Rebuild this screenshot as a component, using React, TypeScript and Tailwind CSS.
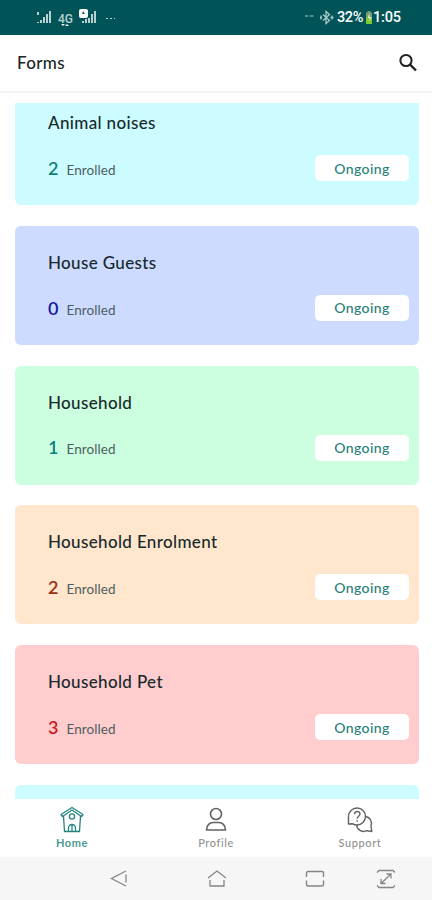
import clsx from "clsx";

type Form = {
  name: string;
  enrolled: number;
  cardColor: string;
  countColor: string;
};

const forms: Form[] = [
  { name: "Animal noises", enrolled: 2, cardColor: "bg-[#ccfcff]", countColor: "text-[#138078]" },
  { name: "House Guests", enrolled: 0, cardColor: "bg-[#ccdbff]", countColor: "text-[#17179c]" },
  { name: "Household", enrolled: 1, cardColor: "bg-[#ccffdf]", countColor: "text-[#087f80]" },
  { name: "Household Enrolment", enrolled: 2, cardColor: "bg-[#ffe6cd]", countColor: "text-[#9c2c12]" },
  { name: "Household Pet", enrolled: 3, cardColor: "bg-[#ffcdce]", countColor: "text-[#d01820]" },
];

export default function App() {
  return (
    <div className="flex h-[900px] w-[432px] flex-col overflow-hidden bg-white font-['Lato',sans-serif] text-[#17292b]">
      <StatusBar />
      <header className="flex h-[58px] shrink-0 items-center justify-between border-b-2 border-[#f3f3f3] pr-[14px] pl-[17px]">
        <h1 className="text-[17px] font-medium tracking-[0.35px] text-[#202626]">Forms</h1>
        <SearchIcon />
      </header>
      <main className="mt-[10px] h-[696px] shrink-0 overflow-hidden pr-[13px] pl-[15px]">
        <div className="-mt-[17px] flex flex-col gap-[20.8px]">
          {forms.map((form) => (
            <FormCard key={form.name} form={form} />
          ))}
          <div className="h-[119px] shrink-0 rounded-md bg-[#ccfcff]" />
        </div>
      </main>
      <nav className="grid h-[58px] shrink-0 grid-cols-3">
        <NavItem label="Home" active>
          <HomeIcon />
        </NavItem>
        <NavItem label="Profile">
          <ProfileIcon />
        </NavItem>
        <NavItem label="Support">
          <SupportIcon />
        </NavItem>
      </nav>
      <SystemBar />
    </div>
  );
}

function FormCard({ form }: { form: Form }) {
  return (
    <section className={clsx("h-[119px] shrink-0 rounded-md pt-[25px] pr-[10px] pl-[33px]", form.cardColor)}>
      <h2 className="text-[17px] leading-6 font-medium tracking-[0.35px]">{form.name}</h2>
      <div className="mt-[20px] flex h-[26px] items-center justify-between">
        <p className="flex items-baseline gap-[8px]">
          <span className={clsx("text-[18px] leading-6 font-semibold", form.countColor)}>{form.enrolled}</span>
          <span className="text-[13.5px] tracking-[0.1px] text-[#4c5d5f]">Enrolled</span>
        </p>
        <span className="flex h-[26px] w-[94px] items-center justify-center rounded-[5px] bg-white text-[14px] font-medium tracking-[0.4px] text-[#267f78]">
          Ongoing
        </span>
      </div>
    </section>
  );
}

function NavItem({ label, active, children }: { label: string; active?: boolean; children: React.ReactNode }) {
  return (
    <a className={clsx("flex flex-col items-center pt-[7px]", active ? "text-[#258580]" : "text-[#626262]")}>
      {children}
      <span
        className={clsx(
          "mt-[2px] text-[11px] leading-[14px] tracking-[0.6px]",
          active ? "font-bold text-[#4b9a95]" : "font-medium text-[#929292]"
        )}
      >
        {label}
      </span>
    </a>
  );
}

function StatusBar() {
  return (
    <div className="flex h-[35px] shrink-0 items-center justify-between bg-[#005457] pr-[31px] pl-[37px] font-['Roboto',sans-serif] text-white">
      <div className="flex items-center">
        <svg width="80" height="20" viewBox="0 0 80 20" fill="#b9d0d1">
          <path d="M0 4h2v3H0zM0 14h2v1H0zM3 12h2v3H3zM6 9h2v6H6zM9 6h2v9H9zM12 3h2v12h-2z" />
          <text x="21" y="15" fontSize="13" fontWeight="500" textLength="15" lengthAdjust="spacingAndGlyphs">
            4G
          </text>
          <path d="M24 16h4l-2 2zM28 18l2-2 2 2z" fill="#fff" />
          <rect x="42" y="1" width="9" height="9" rx="2" fill="#fff" />
          <path d="M46 3l2 3h-3z" fill="#176164" />
          <path d="M45 13h2v2h-2zM48 11h2v4h-2zM51 10h2v5h-2zM54 6h2v9h-2zM57 3h2v12h-2z" />
          <path d="M69 10h2v1h-2zM73 10h2v1h-2zM77 10h1v1h-1z" />
        </svg>
      </div>
      <div className="flex items-center">
        <svg width="30" height="18" viewBox="0 0 30 18" fill="none" stroke="#a9c8c9" strokeWidth="1.3">
          <path d="M0 7h3M4.500 7h4" strokeWidth="1" />
          <path d="M18 5.500l6.500 6-3.500 3v-12l3.500 3-6.500 6" />
          <path d="M15 8.500h2M25.500 8.500h3M16 6.500v4M27 6.500v4" />
        </svg>
        <span className="ml-[2px] w-[27px] text-[14.5px] font-medium tracking-[-0.4px]">32%</span>
        <svg width="8" height="14" viewBox="0 0 8 14" className="ml-px">
          <path d="M2.500 0h3v1.500H7V13H1V1.500h1.500z" fill="#769b79" />
          <path d="M1 7h6v6H1z" fill="#79c932" />
          <path d="M4.500 2L2.500 7h2v4l2-5h-2z" fill="#d9f0c5" />
        </svg>
        <span className="w-[28px] text-[14.5px] font-medium tracking-[-0.2px]">1:05</span>
      </div>
    </div>
  );
}

function SearchIcon() {
  return (
    <svg width="20" height="20" viewBox="0 0 20 20" fill="none" stroke="#202020" strokeWidth="2">
      <circle cx="8" cy="7.500" r="5.600" />
      <path d="M12 11.500l6 6" strokeWidth="2.400" />
    </svg>
  );
}

function HomeIcon() {
  return (
    <svg width="26" height="28" viewBox="0 0 26 28" fill="none" stroke="currentColor" strokeWidth="1.300" strokeLinejoin="round">
      <path d="M13 1.500l11 7-1.500 2L13 4 3.500 10.500 2 8.500z" />
      <path d="M4.500 10l1 15.500h15l1-15.500" />
      <circle cx="13" cy="10.500" r="2.600" />
      <path d="M9.500 25.500V22a3.500 3.500 0 017 0v3.500M13 19v6.500" />
    </svg>
  );
}

function ProfileIcon() {
  return (
    <svg width="26" height="28" viewBox="0 0 26 28" fill="none" stroke="currentColor" strokeWidth="1.600" strokeLinejoin="round">
      <circle cx="13" cy="8" r="5.500" />
      <path d="M3.500 24c0-5 3.500-7.500 6.500-7.500h6c3 0 6.500 2.500 6.500 7.500z" />
    </svg>
  );
}

function SupportIcon() {
  return (
    <svg width="28" height="28" viewBox="0 0 28 28" fill="none" stroke="currentColor" strokeWidth="1.400" strokeLinejoin="round">
      <path d="M2.500 18V10.500a8.500 8.500 0 118.500 8.500c-1.700 0-3-.4-4.200-1.200z" />
      <path d="M20 10.500c4 1 6.500 5 5 9.500l.8 5.500-4.800-.8c-4.500 2-9.500-.2-10.500-5.500" />
      <path d="M8.500 8.300c0-3.800 5.500-3.600 5.500-.3 0 2.200-2.800 2.200-2.800 4.700M11.200 14.200v1.500" />
    </svg>
  );
}

function SystemBar() {
  return (
    <footer className="flex h-[43px] shrink-0 items-start bg-[#f6f6f6] pt-[12px] pl-[110px] text-[#858585]">
      <svg width="18" height="20" viewBox="0 0 18 20" fill="none" stroke="currentColor" strokeWidth="1.300">
        <path d="M16 2L1.500 9.500 16 17M16 5.500v8" />
      </svg>
      <svg width="22" height="20" viewBox="0 0 22 20" fill="none" stroke="currentColor" strokeWidth="1.300" className="ml-[78px]">
        <path d="M2 9l9-7 9 7M4 11v6h14v-6" />
      </svg>
      <svg width="20" height="20" viewBox="0 0 20 20" fill="none" stroke="currentColor" strokeWidth="1.400" className="ml-[77px]">
        <path d="M1.500 8V4a1.500 1.500 0 011.500-1.500h14A1.500 1.500 0 0118.500 4v4M1.500 11.500v4A1.500 1.500 0 003 17h14a1.500 1.500 0 001.500-1.500v-4" />
      </svg>
      <svg width="20" height="20" viewBox="0 0 20 20" fill="none" stroke="currentColor" strokeWidth="1.300" className="ml-[51px]">
        <path d="M1 3.500L3 1.500h14l2 2M1 16.500l2 2h14l2-2" />
        <path d="M5 14.500L15 5M10.500 5H15v4.500M5 10v4.500h4.500" />
      </svg>
    </footer>
  );
}
